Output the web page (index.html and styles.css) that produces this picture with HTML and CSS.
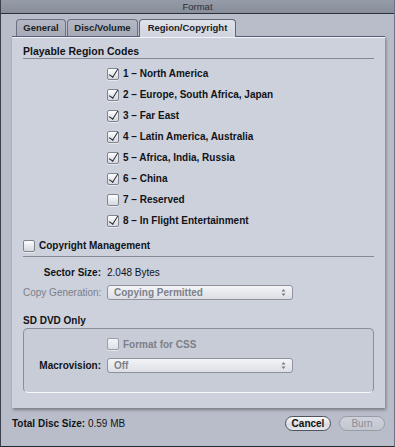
FILE: index.html
```html
<!DOCTYPE html>
<html lang="en">
<head>
    <meta charset="UTF-8">
    <title>Format</title>
    <link rel="stylesheet" href="styles.css">
</head>
<body>
    <div class="window">
        <div class="titlebar">Format</div>

        <div class="tabs">
            <div class="tab tab-general">General</div>
            <div class="tab tab-disc">Disc/Volume</div>
            <div class="tab tab-region selected">Region/Copyright</div>
        </div>

        <div class="panel">
            <div class="section-title">Playable Region Codes</div>

            <div class="region-list">
                <label class="check-row"><span class="cb checked"></span>1 – North America</label>
                <label class="check-row"><span class="cb checked"></span>2 – Europe, South Africa, Japan</label>
                <label class="check-row"><span class="cb checked"></span>3 – Far East</label>
                <label class="check-row"><span class="cb checked"></span>4 – Latin America, Australia</label>
                <label class="check-row"><span class="cb checked"></span>5 – Africa, India, Russia</label>
                <label class="check-row"><span class="cb checked"></span>6 – China</label>
                <label class="check-row"><span class="cb"></span>7 – Reserved</label>
                <label class="check-row"><span class="cb checked"></span>8 – In Flight Entertainment</label>
            </div>

            <label class="check-row copyright"><span class="cb"></span>Copyright Management</label>

            <div class="field sector">
                <span class="field-label">Sector Size:</span>
                <span class="field-value">2.048 Bytes</span>
            </div>

            <div class="field copygen disabled">
                <span class="field-label">Copy Generation:</span>
                <div class="popup">
                    <span>Copying Permitted</span>
                    <svg class="arrows" width="5" height="9" viewBox="0 0 5 9">
                        <path d="M0.5 3.5 L2.5 1 L4.5 3.5 Z M0.5 5.5 L2.5 8 L4.5 5.5 Z" fill="currentColor"/>
                    </svg>
                </div>
            </div>

            <div class="subtitle">SD DVD Only</div>

            <div class="sd-box">
                <label class="check-row css-row disabled"><span class="cb"></span>Format for CSS</label>
                <div class="field macro">
                    <span class="field-label">Macrovision:</span>
                    <div class="popup">
                        <span>Off</span>
                        <svg class="arrows" width="5" height="9" viewBox="0 0 5 9">
                            <path d="M0.5 3.5 L2.5 1 L4.5 3.5 Z M0.5 5.5 L2.5 8 L4.5 5.5 Z" fill="currentColor"/>
                        </svg>
                    </div>
                </div>
            </div>
        </div>

        <div class="footer">
            <div class="disc-size"><b>Total Disc Size:</b> 0.59 MB</div>
            <div class="buttons">
                <button class="btn" type="button">Cancel</button>
                <button class="btn" type="button" disabled>Burn</button>
            </div>
        </div>
    </div>
</body>
</html>
```

FILE: styles.css
```css
:root {
    --window-bg: #b9bdc9;
    --panel-bg: #cdd1dc;
    --box-bg: #c8ccd7;
    --text: #111318;
    --muted: #7c8089;
    --rule: #858995;
}

* {
    box-sizing: border-box;
}

body {
    margin: 0;
    font-family: "Liberation Sans", Arial, sans-serif;
    font-size: 10px;
    color: var(--text);
    background: var(--window-bg);
}

.window {
    width: 395px;
    height: 447px;
    display: flex;
    flex-direction: column;
    background: var(--window-bg);
    border-left: 1px solid #3b404c;
    border-right: 1px solid #6d7280;
    border-bottom: 1px solid #262a33;
}

/* Title bar */
.titlebar {
    height: 14px;
    line-height: 13px;
    text-align: center;
    font-size: 9.5px;
    color: #2b2e35;
    background: linear-gradient(#959ba7, #878d99);
    border-bottom: 1px solid #2c3039;
}

/* Tabs */
.tabs {
    display: flex;
    gap: 1px;
    margin-top: 5px;
    padding-left: 15px;
    height: 17px;
    position: relative;
    z-index: 1;
}

.tab {
    height: 17px;
    line-height: 16px;
    text-align: center;
    font-size: 9.5px;
    font-weight: bold;
    color: #1c1f26;
    background: linear-gradient(#b4b8c4, #a7abb8);
    border: 1px solid #6a7081;
    border-bottom: none;
    border-radius: 4px 4px 0 0;
}

.tab-general { width: 50px; }
.tab-disc { width: 71px; }
.tab-region { width: 97px; }

.tab.selected {
    height: 18px;
    background: linear-gradient(#dfe2e9, #d0d4de);
    border-color: #5e6679;
}

/* Main panel */
.panel {
    margin-left: 11px;
    width: 373px;
    height: 372px;
    background: var(--panel-bg);
    border-top: 1px solid #55617c;
    box-shadow: inset 0 1px 0 #f2f3f6, 1px 2px 3px rgba(0, 0, 0, 0.35);
}

.section-title {
    margin: 7px 11px 0;
    height: 15px;
    line-height: 14px;
    font-size: 10.5px;
    font-weight: bold;
    border-bottom: 1px solid var(--rule);
}

.region-list {
    margin-top: 4px;
    padding-left: 95px;
}

.check-row {
    display: flex;
    align-items: center;
    gap: 4px;
    height: 21px;
    font-weight: bold;
}

/* Checkbox */
.cb {
    position: relative;
    width: 12px;
    height: 12px;
    flex: none;
    border: 1px solid #80848f;
    border-radius: 2px;
    background: linear-gradient(#ffffff, #e6e8ec 55%, #d5d8de);
    box-shadow: 0 1px 0 rgba(255, 255, 255, 0.5);
}

.cb.checked::after {
    content: "";
    position: absolute;
    left: 3px;
    top: -2px;
    width: 3.5px;
    height: 9px;
    border-right: 1.6px solid #23262d;
    border-bottom: 1.6px solid #23262d;
    transform: rotate(32deg);
}

.copyright {
    margin: 4px 11px 0;
    border-bottom: 1px solid var(--rule);
    height: 22px;
}

/* Label / value rows */
.field {
    display: flex;
    align-items: center;
    gap: 6px;
    margin-left: 11px;
}

.field-label {
    width: 78px;
    text-align: right;
    font-weight: bold;
    white-space: nowrap;
}

.sector {
    margin-top: 7px;
    height: 16px;
}

.copygen {
    margin-top: 4px;
    height: 17px;
}

.disabled,
.disabled .field-label {
    color: var(--muted);
    font-weight: normal;
}

.popup {
    width: 186px;
    height: 15px;
    display: flex;
    align-items: center;
    justify-content: space-between;
    padding: 0 6px 0 6px;
    border: 1px solid #8e929c;
    border-radius: 3px;
    background: linear-gradient(#f3f4f7, #dcdfe5);
    color: var(--muted);
    font-weight: bold;
}

.popup .arrows {
    color: #777b85;
}

.subtitle {
    margin: 13px 11px 0;
    height: 14px;
    line-height: 14px;
    font-weight: bold;
}

/* SD DVD group box */
.sd-box {
    margin: 0 11px;
    height: 65px;
    padding-top: 6px;
    background: var(--box-bg);
    border: 1px solid #8a8e99;
    border-bottom-color: #f7f8fa;
    border-radius: 5px;
}

.css-row {
    height: 18px;
    padding-left: 83px;
    font-weight: bold;
}

.css-row .cb {
    border-color: #9a9ea8;
    background: linear-gradient(#f4f5f7, #dde0e6);
}

.macro {
    margin: 4px 0 0;
    height: 17px;
}

.macro .field-label {
    width: 77px;
}

/* Footer */
.footer {
    display: flex;
    justify-content: space-between;
    align-items: center;
    margin-top: 8px;
    padding: 0 9px 0 11px;
    height: 15px;
}

.disc-size {
    font-size: 10px;
}

.buttons {
    display: flex;
    gap: 8px;
}

.btn {
    width: 46px;
    height: 15px;
    padding: 0;
    font-family: inherit;
    font-size: 10px;
    font-weight: bold;
    color: #111;
    background: linear-gradient(#fbfbfc, #d7dae1 60%, #e6e8ed);
    border: 1px solid #4d525e;
    border-radius: 8px;
}

.btn:disabled {
    color: #8a8e98;
    font-weight: normal;
    background: linear-gradient(#cfd2da, #c2c6cf);
    border-color: #989ca6;
}
```
